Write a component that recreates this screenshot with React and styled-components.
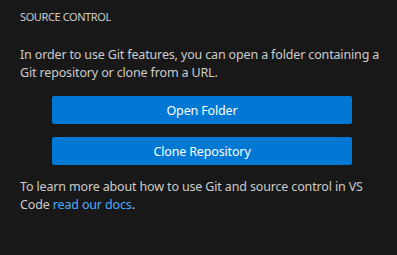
import React from "react";
import styled, { createGlobalStyle } from "styled-components";

const Global = createGlobalStyle`
  html, body {
    margin: 0;
    padding: 0;
    background: #181818;
  }
  body {
    font-family: "Noto Sans", "Open Sans", sans-serif;
    color: #cccccc;
  }
`;

const Panel = styled.div`
  width: 397px;
  height: 255px;
  background: #181818;
  box-sizing: border-box;
  padding: 0 13px 0 20px;
`;

const Header = styled.div`
  height: 32px;
  display: flex;
  align-items: center;
  font-size: 11px;
  letter-spacing: -0.4px;
  color: #cccccc;
`;

const Text = styled.p`
  margin: ${(p) => p.$top || 0}px 0 0;
  font-size: 12.5px;
  line-height: 18px;
  letter-spacing: -0.15px;
`;

const Buttons = styled.div`
  display: flex;
  flex-direction: column;
  align-items: center;
  gap: 13px;
  margin-top: 14px;
`;

const Button = styled.button`
  width: 300px;
  height: 28px;
  padding: 0;
  border: none;
  border-radius: 2px;
  background: #0078d4;
  color: #ffffff;
  font-family: inherit;
  font-size: 12.5px;
  letter-spacing: -0.15px;
  cursor: pointer;
`;

const Link = styled.a`
  color: #4daafc;
  text-decoration: none;
`;

export default function App() {
  return (
    <>
      <Global />
      <Panel>
        <Header>SOURCE CONTROL</Header>
        <Text $top={14}>
          In order to use Git features, you can open a folder containing a Git
          repository or clone from a URL.
        </Text>
        <Buttons>
          <Button>Open Folder</Button>
          <Button>Clone Repository</Button>
        </Buttons>
        <Text $top={13}>
          To learn more about how to use Git and source control in VS Code{" "}
          <Link href="#">read our docs</Link>.
        </Text>
      </Panel>
    </>
  );
}
